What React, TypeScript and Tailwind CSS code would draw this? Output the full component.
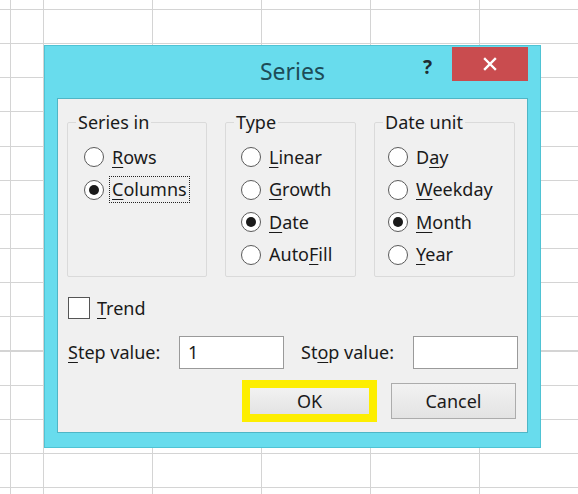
import React from "react";

const font = "font-['Segoe_UI','Noto_Sans','Open_Sans',sans-serif]";

const Key = ({ text, at }: { text: string; at: number }) => (
  <>
    {text.slice(0, at)}
    <span className="underline decoration-1 underline-offset-[3px]">{text[at]}</span>
    {text.slice(at + 1)}
  </>
);

const Radio = ({
  label,
  at,
  checked,
  focus,
}: {
  label: string;
  at: number;
  checked?: boolean;
  focus?: boolean;
}) => (
  <div className="flex h-[32.5px] items-center">
    <span className="flex h-[20px] w-[20px] shrink-0 items-center justify-center rounded-full border border-[#5a5a5a] bg-white">
      {checked && <span className="h-[10px] w-[10px] rounded-full bg-[#1a1a1a]" />}
    </span>
    <span
      className={
        focus
          ? "ml-[5px] border border-dotted border-[#222] px-[2px] leading-[25px]"
          : "ml-[8px] leading-[25px]"
      }
    >
      <Key text={label} at={at} />
    </span>
  </div>
);

const Group = ({
  title,
  width,
  pl,
  children,
}: {
  title: string;
  width: string;
  pl: string;
  children: React.ReactNode;
}) => (
  <fieldset className={`h-[166px] ${width} rounded-[2px] border border-[#dadada]`}>
    <legend className="ml-[8px] px-[2px] leading-[23px]">{title}</legend>
    <div className={`mt-[7px] flex flex-col ${pl}`}>{children}</div>
  </fieldset>
);

export default function App() {
  return (
    <div
      className={`${font} h-[494px] w-[578px] overflow-hidden bg-white bg-[repeating-linear-gradient(to_right,#d4d4d4_0px,#d4d4d4_1px,transparent_1px,transparent_109px),repeating-linear-gradient(to_bottom,#d4d4d4_0px,#d4d4d4_1px,transparent_1px,transparent_34.15px)] bg-[position:43px_9px] pt-[45px] pl-[44px] text-[18px] text-[#1a1a1a]`}
    >
      <div className="flex h-[403px] w-[497px] flex-col border border-[#4fc3d4] bg-[#68dced] px-[12px] pb-[14px]">
        {/* title bar */}
        <div className="flex h-[52px] shrink-0">
          <div className="flex-1" />
          <div className="self-center pb-[1px] text-[23px] text-[#1d4c58]">Series</div>
          <div className="flex flex-1 items-start justify-end">
            <span className="mt-[9px] mr-[20px] text-[19px] font-bold leading-[24px] text-[#1f2d33]">?</span>
            <button className="mt-[1px] flex h-[34px] w-[76px] items-center justify-center bg-[#c94c4f]">
              <svg width="14" height="14" viewBox="0 0 14 14">
                <path d="M2 2L12 12M12 2L2 12" stroke="#fff" strokeWidth="2.4" strokeLinecap="square" />
              </svg>
            </button>
          </div>
        </div>

        {/* body */}
        <div className="flex flex-1 flex-col border border-[#4fb6c6] bg-[#f0f0f0] pt-[12px] pl-[9px]">
          <div className="flex gap-[18px]">
            <Group title="Series in" width="w-[140px]" pl="pl-[16px]">
              <Radio label="Rows" at={0} />
              <Radio label="Columns" at={0} checked focus />
            </Group>
            <Group title="Type" width="w-[131px]" pl="pl-[15px]">
              <Radio label="Linear" at={0} />
              <Radio label="Growth" at={0} />
              <Radio label="Date" at={0} checked />
              <Radio label="AutoFill" at={4} />
            </Group>
            <Group title="Date unit" width="w-[141px]" pl="pl-[13px]">
              <Radio label="Day" at={1} />
              <Radio label="Weekday" at={0} />
              <Radio label="Month" at={0} checked />
              <Radio label="Year" at={0} />
            </Group>
          </div>

          <div className="mt-[20px] flex h-[22px] items-center pl-[1px]">
            <span className="h-[22px] w-[22px] border border-[#555] bg-white" />
            <span className="ml-[7px]">
              <Key text="Trend" at={0} />
            </span>
          </div>

          <div className="mt-[17px] flex h-[33px] items-center pl-[1px]">
            <span className="w-[111px]">
              <Key text="Step value:" at={0} />
            </span>
            <div className="flex h-[33px] w-[105px] items-center border border-[#9a9a9a] bg-white pl-[8px]">1</div>
            <span className="ml-[17px] w-[112px]">
              <Key text="Stop value:" at={2} />
            </span>
            <div className="h-[33px] w-[105px] border border-[#9a9a9a] bg-white" />
          </div>

          <div className="mt-[11px] flex items-center justify-end gap-[14px] pr-[11px]">
            <div className="flex h-[42px] w-[135px] items-center justify-center border-[8px] border-[#fdee00] bg-[linear-gradient(#f2f2f2,#e3e3e3)]">
              OK
            </div>
            <button className="flex h-[36px] w-[125px] items-center justify-center border border-[#acacac] bg-[linear-gradient(#f2f2f2,#e3e3e3)]">
              Cancel
            </button>
          </div>
        </div>
      </div>
    </div>
  );
}
